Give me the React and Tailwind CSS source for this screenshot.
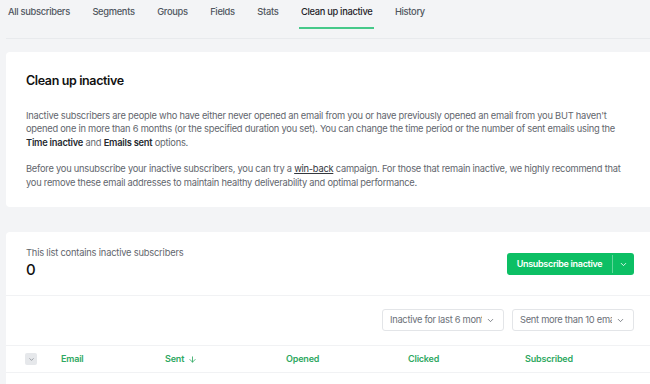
import React from "react";
import { ChevronDown, ArrowDown } from "lucide-react";

const tabs = [
  "All subscribers",
  "Segments",
  "Groups",
  "Fields",
  "Stats",
  "Clean up inactive",
  "History",
];

const App = () => {
  const active = "Clean up inactive";

  return (
    <div className="h-[384px] w-[650px] overflow-hidden bg-[#f3f4f6] font-['Inter',sans-serif] text-[#111827]">
      {/* Tabs */}
      <nav className="ml-[6px] flex h-[39px] gap-[18.5px] border-b border-[#e8eaed]">
        {tabs.map((tab) => (
          <div
            key={tab}
            className={
              tab === active
                ? "h-[29px] border-b-2 border-[#46c98a] px-[2px] pt-[6px] text-[9.3px] leading-[12px] tracking-[-0.032em] font-medium text-[#1f2328]"
                : "h-[29px] px-[2px] pt-[6px] text-[9.3px] leading-[12px] tracking-[-0.032em] font-medium text-[#50565e]"
            }
          >
            {tab}
          </div>
        ))}
      </nav>

      <div className="w-[654px] pl-[6px]">
        {/* Intro card */}
        <section className="mt-[13px] h-[155px] rounded-[4px] bg-white px-[20px] pt-[21px]">
          <h2 className="text-[12.5px] leading-[16px] tracking-[-0.03em] font-semibold text-[#111]">
            Clean up inactive
          </h2>
          <div className="mt-[20px] text-[9.3px] leading-[13.33px] tracking-[-0.025em] text-[#62666d]">
            <p>
              Inactive subscribers are people who have either never opened an
              email from you or have previously opened an email from you BUT
              haven't opened one in more than 6 months (or the specified
              duration you set). You can change the time period or the number
              of sent emails using the{" "}
              <b className="font-semibold text-[#262a30]">Time inactive</b> and{" "}
              <b className="font-semibold text-[#262a30]">Emails sent</b>{" "}
              options.
            </p>
            <p className="mt-[13.33px]">
              Before you unsubscribe your inactive subscribers, you can try a{" "}
              <span className="text-[#33373d] underline">win-back</span>{" "}
              campaign. For those that remain inactive, we highly recommend
              that you remove these email addresses to maintain healthy
              deliverability and optimal performance.
            </p>
          </div>
        </section>

        {/* List card */}
        <section className="mt-[25px] h-[200px] rounded-t-[4px] bg-white">
          <div className="flex h-[64px] items-start justify-between border-b border-[#f1f2f4] px-[20px] pt-[15px]">
            <div>
              <p className="text-[9.3px] leading-[12px] tracking-[-0.02em] text-[#62666d]">
                This list contains inactive subscribers
              </p>
              <p className="mt-[2px] text-[15px] leading-[18px] font-medium text-[#111]">
                0
              </p>
            </div>
            <div className="mt-[6px] flex h-[22px] overflow-hidden rounded-[3px] bg-[#0cbf64] text-white">
              <button className="w-[105px] text-[9px] tracking-[-0.035em] font-semibold">
                Unsubscribe inactive
              </button>
              <div className="my-[2px] w-px bg-[#5fd79a]" />
              <button className="flex w-[21px] items-center justify-center">
                <ChevronDown size={9} strokeWidth={2.2} />
              </button>
            </div>
          </div>

          {/* Filters */}
          <div className="flex h-[50px] items-start justify-end gap-[8px] border-b border-[#f1f2f4] px-[20px] pt-[13px]">
            <div className="flex h-[22px] w-[122px] items-center justify-between rounded-[3px] border border-[#e3e5e8] pl-[7px] pr-[8px]">
              <span className="w-[92px] overflow-hidden whitespace-nowrap text-[9.3px] tracking-[-0.03em] text-[#6b7078]">
                Inactive for last 6 months
              </span>
              <ChevronDown size={9} strokeWidth={2} className="text-[#5b6068]" />
            </div>
            <div className="flex h-[22px] w-[122px] items-center justify-between rounded-[3px] border border-[#e3e5e8] pl-[7px] pr-[8px]">
              <span className="w-[92px] overflow-hidden whitespace-nowrap text-[9.3px] tracking-[-0.03em] text-[#6b7078]">
                Sent more than 10 emails
              </span>
              <ChevronDown size={9} strokeWidth={2} className="text-[#5b6068]" />
            </div>
          </div>

          {/* Table header */}
          <div className="grid h-[27px] grid-cols-[36px_104px_121px_122px_117px_1fr] items-center border-b border-[#f1f2f4] pl-[19px] text-[9px] tracking-[-0.02em] font-semibold text-[#2ea861]">
            <div className="flex h-[12px] w-[12px] items-center justify-center rounded-[2px] bg-[#e6e8eb]">
              <ChevronDown size={7} strokeWidth={2.4} className="text-[#7a7f87]" />
            </div>
            <div>Email</div>
            <div className="flex items-center gap-[4px]">
              Sent <ArrowDown size={9} strokeWidth={2.2} />
            </div>
            <div>Opened</div>
            <div>Clicked</div>
            <div>Subscribed</div>
          </div>
        </section>
      </div>
    </div>
  );
};

export default App;
